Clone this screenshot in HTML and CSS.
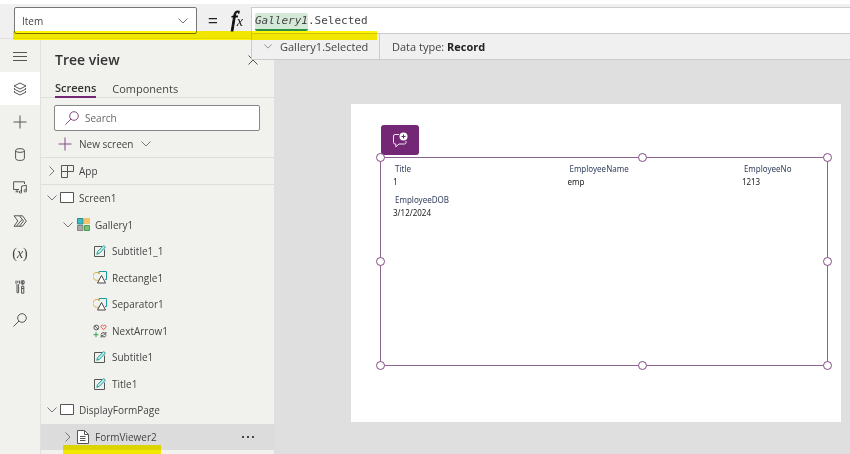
FILE: index.html
```html
<!DOCTYPE html>
<html lang="en">
<head>
    <title>Power Apps Studio</title>
    <meta charset="utf-8"/>
    <link rel="stylesheet" href="styles.css">
</head>
<body>
<!-- shared icons -->
<svg class="defs" width="0" height="0" aria-hidden="true">
    <symbol id="down" viewBox="0 0 10 6"><path d="M.5.5 5 5 9.5.5"/></symbol>
    <symbol id="right" viewBox="0 0 6 10"><path d="M.5.5 5 5 .5 9.5"/></symbol>
    <symbol id="plus" viewBox="0 0 14 14"><path d="M7 .5v13M.5 7h13"/></symbol>
    <symbol id="glass" viewBox="0 0 14 14"><circle cx="9" cy="5" r="4.3"/><path d="M6 8 .5 13.5"/></symbol>
    <symbol id="screen" viewBox="0 0 14 12"><path d="M.5.5h13v10H.5z" fill="#fff"/></symbol>
    <symbol id="edit" viewBox="0 0 12 12">
        <path d="M8 1.5H.5v10h10v-7"/>
        <path d="m2.800 9.300.8-2.800L9.800.6l1.600 1.500-6 6.200z" fill="#c9efee" stroke="#1a9a9a"/>
    </symbol>
    <symbol id="shapes" viewBox="0 0 14 13">
        <path d="M6 3V.5h7.500v8H12" stroke="#1a9a9a"/>
        <path d="M6 2a4 4 0 1 0-.5 7" stroke="#e5a93d"/>
        <path d="m8.500 4.500 4 7.500h-8z" fill="#fff" stroke="#444"/>
    </symbol>
</svg>

<header class="formula-bar">
    <div class="property">
        <select aria-label="Property">
            <option>Item</option>
        </select>
        <svg class="icon thin" width="10" height="6"><use href="#down"/></svg>
    </div>
    <span class="equals">=</span>
    <span class="fx">f<small>x</small></span>
    <div class="formula">
        <div class="formula-input" role="textbox" aria-label="Formula" contenteditable="true" spellcheck="false"><em>Gallery1</em>.Selected</div>
        <div class="result">
            <button class="result-name">
                <svg class="icon thin" width="8" height="5"><use href="#down"/></svg>
                Gallery1.Selected
            </button>
            <span class="result-type">Data type: <b>Record</b></span>
        </div>
    </div>
    <div class="mark mark-top"></div>
</header>

<div class="studio">
    <nav class="rail">
        <button aria-label="Menu"><svg class="icon" width="14" height="10" viewBox="0 0 14 10"><path d="M0 1.500h14M0 5.500h14M0 9.500h14"/></svg></button>
        <button class="active" aria-label="Tree view"><svg class="icon" width="14" height="14" viewBox="0 0 14 14"><path d="m7 1 6 3-6 3-6-3zM2 6 1 7l6 3 6-3-1-1M2 9l-1 1 6 3 6-3-1-1"/></svg></button>
        <button aria-label="Insert"><svg class="icon" width="14" height="14"><use href="#plus"/></svg></button>
        <button aria-label="Data"><svg class="icon" width="10" height="13" viewBox="0 0 10 13"><ellipse cx="5" cy="2.500" rx="4.400" ry="1.900"/><path d="M.6 2.500v8c0 2.600 8.800 2.600 8.800 0v-8"/></svg></button>
        <button aria-label="Media"><svg class="icon" width="14" height="13" viewBox="0 0 14 13"><path d="M11.500 3V.8H.6v7.700H6M2.500 10.800h3M4 8.500v2.300M8.500 11V5.200l4.800-1v5.600"/><circle cx="7.500" cy="11" r="1.200"/><circle cx="12.300" cy="9.800" r="1.200"/></svg></button>
        <button aria-label="Power Automate"><svg class="icon" width="14" height="12" viewBox="0 0 14 12"><path d="M1 .8h8.500L13.300 6l-3.800 5.200H1L4.800 6zM6.500.8l2.700 3.500-5.700 6.900M9.200 4.300 10.500 6l-4 5.200"/></svg></button>
        <button class="variables" aria-label="Variables">(<i>x</i>)</button>
        <button aria-label="Advanced tools"><svg class="icon" width="10" height="14" viewBox="0 0 10 14"><path d="M1 .6v2.900l1 1v8.200h1.600V4.500l1-1V.6M2.800.6v2.500M7.700.8v4.500M6.300.8h2.800v3H6.300zM6.600 6.300h2.200v6.900H6.600zM6.600 8.500h2.200"/></svg></button>
        <button aria-label="Search"><svg class="icon" width="14" height="14"><use href="#glass"/></svg></button>
    </nav>

    <aside class="panel">
        <div class="panel-head">
            <h1>Tree view</h1>
            <button aria-label="Close"><svg class="icon" width="10" height="10" viewBox="0 0 10 10"><path d="m.5.5 9 9M9.500.5l-9 9"/></svg></button>
        </div>
        <div class="tabs">
            <button class="active">Screens</button>
            <button>Components</button>
        </div>
        <label class="search">
            <svg class="icon purple" width="14" height="14"><use href="#glass"/></svg>
            <input type="text" placeholder="Search" aria-label="Search">
        </label>
        <button class="new-screen">
            <svg class="icon purple" width="14" height="14"><use href="#plus"/></svg>
            New screen
            <svg class="icon thin" width="10" height="6"><use href="#down"/></svg>
        </button>
        <div class="row app">
            <span class="arrow"><svg class="icon thin" width="6" height="10"><use href="#right"/></svg></span>
            <span class="kind"><svg class="icon" width="13" height="13" viewBox="0 0 13 13"><path d="M.5.5h6v12h-6zM.5 6.500h12v-6h-6"/></svg></span>
            App
        </div>
        <ul class="tree">
            <li class="row">
                <span class="arrow"><svg class="icon thin" width="10" height="6"><use href="#down"/></svg></span>
                <span class="kind"><svg class="icon" width="14" height="12"><use href="#screen"/></svg></span>
                Screen1
            </li>
            <li class="row level-2">
                <span class="arrow"><svg class="icon thin" width="10" height="6"><use href="#down"/></svg></span>
                <span class="kind"><svg width="13" height="13" viewBox="0 0 13 13">
                    <path d="M.5.5H6V6H.5z" fill="#41bcc4" stroke="#258b93"/>
                    <path d="M7 0h6v6H7z" fill="#f5c36c"/>
                    <path d="M.5 7.500H6v5H.5z" fill="#a9a9a9" stroke="#858585"/>
                    <path d="M7.500 7.500h5v5h-5z" fill="#78c17c" stroke="#4b9e52"/>
                </svg></span>
                Gallery1
            </li>
            <li class="row level-3"><span class="kind"><svg class="icon" width="12" height="12"><use href="#edit"/></svg></span>Subtitle1_1</li>
            <li class="row level-3"><span class="kind"><svg class="icon" width="14" height="13"><use href="#shapes"/></svg></span>Rectangle1</li>
            <li class="row level-3"><span class="kind"><svg class="icon" width="14" height="13"><use href="#shapes"/></svg></span>Separator1</li>
            <li class="row level-3">
                <span class="kind"><svg class="icon" width="14" height="14" viewBox="0 0 14 14">
                    <circle cx="3.300" cy="3.500" r="2.400"/><path d="m1.700 1.900 3.200 3.200"/>
                    <path d="M10.600 5.700 8.200 3.300c-.9-1.600 1.300-2.900 2.400-1.300 1.100-1.600 3.300-.3 2.400 1.300z" stroke="#e0523f"/>
                    <path d="M3 8.200v5M.5 10.700h5" stroke="#3c9e48"/>
                    <path d="M8 10.300c.5-1.900 3.300-2.200 4.400-.6M12.900 8v2.200h-2.200M13.100 11.300c-.5 1.900-3.300 2.200-4.400.6M8.200 13.600v-2.200h2.200"/>
                </svg></span>
                NextArrow1
            </li>
            <li class="row level-3"><span class="kind"><svg class="icon" width="12" height="12"><use href="#edit"/></svg></span>Subtitle1</li>
            <li class="row level-3"><span class="kind"><svg class="icon" width="12" height="12"><use href="#edit"/></svg></span>Title1</li>
            <li class="row">
                <span class="arrow"><svg class="icon thin" width="10" height="6"><use href="#down"/></svg></span>
                <span class="kind"><svg class="icon" width="14" height="12"><use href="#screen"/></svg></span>
                DisplayFormPage
            </li>
            <li class="row level-2 selected">
                <span class="arrow"><svg class="icon thin" width="6" height="10"><use href="#right"/></svg></span>
                <span class="kind"><svg class="icon" width="12" height="14" viewBox="0 0 12 14"><path d="M.5.5h7l4 4v9H.5z" fill="#fff"/><path d="M7.500.5v4h4M3 6.500h5.500M3 8.500h5.500M3 10.500h5.500"/></svg></span>
                FormViewer2
                <button class="more" aria-label="More"><svg width="14" height="2" viewBox="0 0 14 2"><circle cx="2" cy="1" r=".9"/><circle cx="7" cy="1" r=".9"/><circle cx="12" cy="1" r=".9"/></svg></button>
            </li>
        </ul>
        <div class="mark mark-bottom"></div>
    </aside>

    <main class="canvas">
        <div class="artboard">
            <button class="comment" aria-label="Add comment">
                <svg width="16" height="16" viewBox="0 0 16 16">
                    <path d="M7 2.500H3Q1.500 2.500 1.500 4v6.500Q1.500 12 3 12h.8v2.800L7 12h5.500q1.500 0 1.500-1.500V9" fill="none" stroke="#f3e6f3"/>
                    <circle cx="11.500" cy="4.500" r="4" fill="#fff"/>
                    <path d="M11.500 2.500v4M9.500 4.500h4" stroke="#742774"/>
                </svg>
            </button>
            <div class="form">
                <dl class="card"><dt>Title</dt><dd>1</dd></dl>
                <dl class="card"><dt>EmployeeName</dt><dd>emp</dd></dl>
                <dl class="card"><dt>EmployeeNo</dt><dd>1213</dd></dl>
                <dl class="card"><dt>EmployeeDOB</dt><dd>3/12/2024</dd></dl>
                <i class="handle top left"></i>
                <i class="handle top center"></i>
                <i class="handle top right"></i>
                <i class="handle middle left"></i>
                <i class="handle middle right"></i>
                <i class="handle bottom left"></i>
                <i class="handle bottom center"></i>
                <i class="handle bottom right"></i>
            </div>
        </div>
    </main>
</div>
</body>
</html>
```
FILE: styles.css
```css
* {
    box-sizing: border-box;
}

body {
    margin: 0;
    min-height: 100vh;
    display: flex;
    flex-direction: column;
    font-family: "Open Sans", "Noto Sans", sans-serif;
    font-size: 10px;
    color: #444;
    background-color: #dfdfdf;
}

button, input, select {
    font: inherit;
    color: inherit;
    background: none;
    border: none;
    padding: 0;
    margin: 0;
}

button {
    cursor: pointer;
}

svg {
    display: block;
    flex: none;
}

.defs {
    position: absolute;
}

.icon {
    fill: none;
    stroke: #555;
}

.thin {
    stroke: #777;
}

.purple {
    stroke: #864a86;
}

/* formula bar */
.formula-bar {
    position: relative;
    z-index: 1;
    display: flex;
    height: 39px;
    padding: 3px 0 5px 14px;
    border-top: 4px solid #fff;
    border-bottom: 1px solid #e2e2e2;
    background-color: #f0f0f0;
}

.property {
    display: flex;
    align-items: center;
    width: 183px;
    height: 27px;
    padding-right: 8px;
    border: 1px solid #777;
    border-radius: 2px;
    background-color: #fff;
}

.property select {
    flex: 1;
    height: 25px;
    padding-left: 7px;
    appearance: none;
}

.equals {
    width: 32px;
    text-align: center;
    font-size: 18px;
    line-height: 26px;
    color: #222;
}

.fx {
    width: 22px;
    padding-left: 2px;
    font: italic 21px/24px "Liberation Serif", serif;
    color: #111;
    -webkit-text-stroke: 1px #111;
    white-space: nowrap;
}

.fx small {
    font-size: 14px;
    -webkit-text-stroke: 0;
}

.formula {
    position: relative;
    flex: 1;
}

.formula-input {
    height: 27px;
    padding: 5px 3px 4px;
    border: 1px solid #ccc;
    border-right: none;
    background-color: #fff;
    font: 11px/16px "DejaVu Sans Mono", monospace;
    white-space: nowrap;
}

.formula-input em {
    display: inline-block;
    height: 18px;
    border-bottom: 2px solid #2c9140;
    border-radius: 2px;
    background-color: #d5e9d9;
}

.result {
    position: absolute;
    top: 27px;
    left: 0;
    right: 0;
    display: flex;
    height: 26px;
    border: 1px solid #ccc;
    border-top: none;
    border-right: none;
    background-color: #f0f0f0;
    font-size: 11px;
}

.result-name {
    display: flex;
    align-items: center;
    gap: 8px;
    width: 128px;
    padding-left: 12px;
    border-right: 1px solid #ccc;
    white-space: nowrap;
}

.result-type {
    padding-left: 12px;
    line-height: 26px;
}

.result-type b {
    color: #222;
}

/* yellow marker strokes */
.mark {
    position: absolute;
    background-color: #fff500;
    mix-blend-mode: multiply;
}

.mark-top {
    top: 27px;
    left: 13px;
    width: 364px;
    height: 9px;
}

.mark-bottom {
    bottom: 0;
    left: 22px;
    width: 98px;
    height: 9px;
}

.studio {
    flex: 1;
    display: flex;
}

.rail {
    display: flex;
    flex-direction: column;
    width: 40px;
    background-color: #f1f2ee;
}

.rail button {
    display: flex;
    align-items: center;
    justify-content: center;
    height: 33px;
}

.rail .active {
    background-color: #fff;
}

.rail .variables {
    font: 14px "Liberation Serif", serif;
}

/* tree panel */
.panel {
    position: relative;
    display: flex;
    flex-direction: column;
    width: 234px;
    border-left: 1px solid #e0e0de;
    background-color: #f1f2ee;
}

.panel-head {
    display: flex;
    align-items: center;
    justify-content: space-between;
    height: 41px;
    padding: 0 16px 0 14px;
}

h1 {
    margin: 0;
    font-size: 14px;
    font-weight: 600;
    color: #333;
}

.tabs {
    display: flex;
    gap: 16px;
    height: 18px;
    padding-left: 14px;
    border-bottom: 1px solid #ddd;
    font-size: 11px;
    line-height: 14px;
}

.tabs button {
    height: 18px;
}

.tabs .active {
    border-bottom: 2px solid #742774;
    font-weight: 600;
    color: #333;
}

.search {
    display: flex;
    align-items: center;
    gap: 6px;
    height: 26px;
    margin: 7px 14px 0 13px;
    padding-left: 10px;
    border: 1px solid #888;
    border-radius: 2px;
    background-color: #fff;
}

.search input {
    flex: 1;
    min-width: 0;
    outline: none;
}

.search input::placeholder {
    color: #666;
}

.new-screen {
    display: flex;
    align-items: center;
    gap: 7px;
    height: 26px;
    padding-left: 17px;
}

.row {
    display: flex;
    align-items: center;
    padding-left: 6px;
}

.arrow {
    display: flex;
    justify-content: center;
    width: 10px;
}

.kind {
    display: flex;
    justify-content: center;
    width: 14px;
    margin: 0 5px 0 3px;
}

.app {
    height: 28px;
    border-top: 1px solid #ddd;
    border-bottom: 1px solid #ddd;
}

.tree {
    flex: 1;
    display: grid;
    grid-auto-rows: 1fr;
    margin: 0;
    padding: 0 0 4px;
    list-style: none;
}

.level-2 {
    padding-left: 22px;
}

.level-3 {
    padding-left: 49px;
}

.selected {
    background-color: #dcdcdc;
}

.more {
    margin-left: auto;
    padding: 6px 19px 6px 6px;
}

/* design surface */
.canvas {
    flex: 1;
    display: flex;
    padding: 65px 9px 32px 77px;
    background-color: #dfdfdf;
}

.artboard {
    flex: 1;
    display: flex;
    flex-direction: column;
    align-items: flex-start;
    padding: 21px 13px 56px 29px;
    background-color: #fff;
}

.comment {
    display: flex;
    align-items: center;
    justify-content: center;
    width: 38px;
    height: 30px;
    margin: 0 0 2px 1px;
    border-radius: 3px;
    background-color: #742774;
}

.form {
    position: relative;
    flex: 1;
    align-self: stretch;
    display: grid;
    grid-template-columns: 41fr 41fr 20fr;
    grid-auto-rows: 31px;
    padding: 4px 0 0 12px;
    border: 1px solid #8d648d;
    font-family: "Noto Sans", sans-serif;
    font-size: 8px;
    line-height: 13px;
}

.card {
    margin: 0;
}

.card dt {
    padding-left: 2px;
    color: #33415f;
}

.card dd {
    margin: 0;
    color: #222;
}

.handle {
    position: absolute;
    width: 9px;
    height: 9px;
    border: 1px solid #864a86;
    border-radius: 50%;
    background-color: #fff;
}

.top {
    top: -5px;
}

.middle {
    top: calc(50% - 5px);
}

.bottom {
    bottom: -5px;
}

.left {
    left: -5px;
}

.center {
    left: calc(58% - 2px);
}

.right {
    right: -5px;
}
```
